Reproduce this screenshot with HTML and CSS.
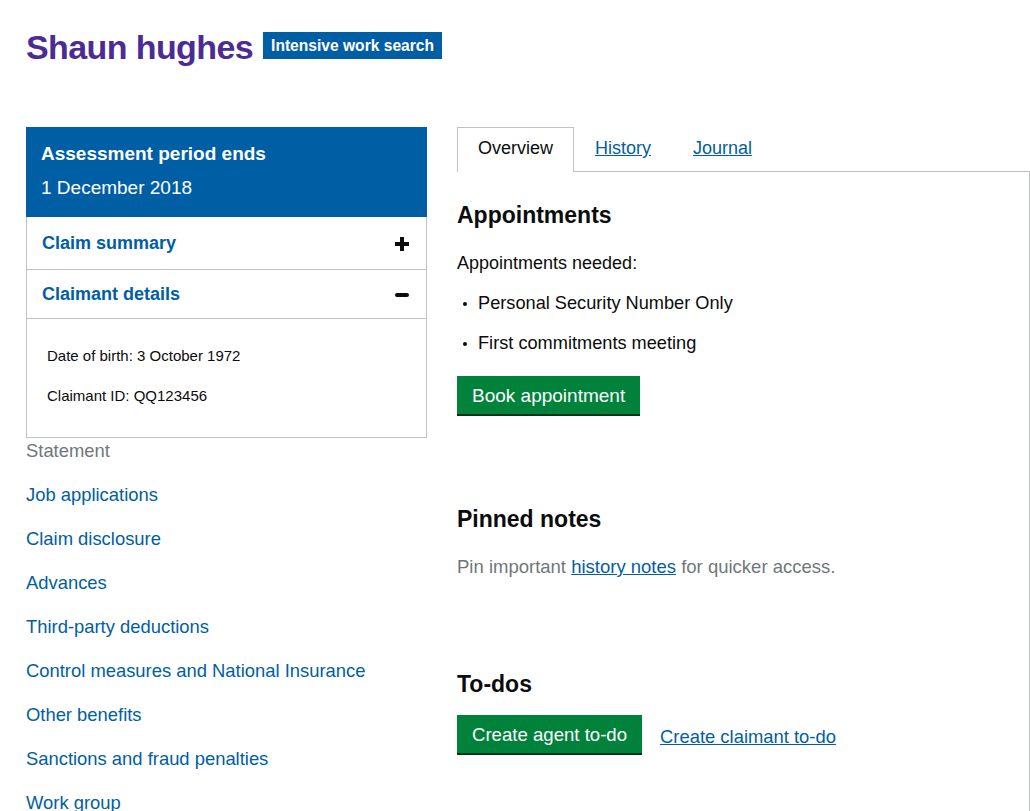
FILE: index.html
```html
<!DOCTYPE html>
<html lang="en">
<head>
<meta charset="utf-8">
<title>Shaun hughes</title>
<link rel="stylesheet" href="styles.css">
</head>
<body>
<div class="page">
  <header class="title-row">
    <h1 class="name">Shaun hughes</h1>
    <span class="tag">Intensive work search</span>
  </header>

  <div class="layout">
    <aside class="side">
      <div class="period">
        <p class="period-label">Assessment period ends</p>
        <p class="period-date">1 December 2018</p>
      </div>
      <div class="acc">
        <div class="acc-row">
          <span class="acc-title">Claim summary</span>
          <svg class="acc-icon" width="14" height="14" viewBox="0 0 14 14"><path d="M5 0h4v5h5v4H9v5H5V9H0V5h5z" fill="#0b0c0c"/></svg>
        </div>
        <div class="acc-row">
          <span class="acc-title">Claimant details</span>
          <svg class="acc-icon" width="14" height="14" viewBox="0 0 14 14"><rect x="0" y="5" width="14" height="4" rx="2" fill="#0b0c0c"/></svg>
        </div>
        <div class="acc-body">
          <p>Date of birth: 3 October 1972</p>
          <p>Claimant ID: QQ123456</p>
        </div>
      </div>
      <ul class="side-nav">
        <li class="muted">Statement</li>
        <li><a href="#">Job applications</a></li>
        <li><a href="#">Claim disclosure</a></li>
        <li><a href="#">Advances</a></li>
        <li><a href="#">Third-party deductions</a></li>
        <li><a href="#">Control measures and National Insurance</a></li>
        <li><a href="#">Other benefits</a></li>
        <li><a href="#">Sanctions and fraud penalties</a></li>
        <li><a href="#">Work group</a></li>
      </ul>
    </aside>

    <main class="main">
      <nav class="tabs">
        <span class="tab active">Overview</span>
        <a class="tab" href="#">History</a>
        <a class="tab" href="#">Journal</a>
      </nav>
      <section class="panel">
        <h2 class="h2">Appointments</h2>
        <p class="body">Appointments needed:</p>
        <ul class="bullets">
          <li>Personal Security Number Only</li>
          <li>First commitments meeting</li>
        </ul>
        <button class="btn">Book appointment</button>

        <h2 class="h2 gap">Pinned notes</h2>
        <p class="body pin muted">Pin important <a href="#">history notes</a> for quicker access.</p>

        <h2 class="h2 gap">To-dos</h2>
        <div class="actions">
          <button class="btn btn-sm">Create agent to-do</button>
          <a href="#" class="action-link">Create claimant to-do</a>
        </div>
      </section>
    </main>
  </div>
</div>
</body>
</html>
```

FILE: styles.css
```css
* { box-sizing: border-box; }
html, body { margin: 0; padding: 0; background: #fff; }
body {
  font-family: "Liberation Sans", Arial, sans-serif;
  color: #0b0c0c;
  font-size: 19px;
  line-height: 25px;
  overflow: hidden;
}
a { color: #005ea5; }
p { margin: 0; }
ul { margin: 0; padding: 0; list-style: none; }

.page { padding: 27px 0 0 26px; }

.title-row {
  display: flex;
  align-items: flex-start;
  gap: 10px;
  height: 100px;
}
.name {
  margin: 0;
  font-size: 34px;
  line-height: 40px;
  font-weight: 700;
  color: #4c2c92;
  letter-spacing: -0.6px;
}
.tag {
  margin-top: 5px;
  background: #005ea5;
  color: #fff;
  font-weight: 700;
  font-size: 15.6px;
  line-height: 27px;
  padding: 0 8px;
}

.layout { display: flex; gap: 30px; align-items: flex-start; }
.side { width: 401px; flex: none; }
.main { flex: 1; min-width: 0; }

.period {
  background: #005ea5;
  color: #fff;
  padding: 14px 15px 17px;
  height: 90px;
}
.period-label { font-weight: 700; }
.period-date { margin-top: 9px; }

.acc { border: 1px solid #bfc1c3; border-top: 0; }
.acc-row {
  display: flex;
  align-items: center;
  justify-content: space-between;
  padding: 14px 17px 13px 15px;
  border-bottom: 1px solid #bfc1c3;
}
.acc-row + .acc-row { padding: 12px 17px 11px 15px; }
.acc-title { color: #005ea5; font-weight: 700; font-size: 18px; }
.acc-icon { display: block; }
.acc-body { padding: 27px 20px 31px; font-size: 15px; line-height: 20px; }
.acc-body p + p { margin-top: 20px; }

.side-nav li { margin-bottom: 19px; font-size: 18.4px; }
.side-nav a { text-decoration: none; }
.muted { color: #6f777b; }

.tabs { display: flex; align-items: flex-end; position: relative; z-index: 1; }
.tab {
  padding: 8px 20px 11px;
  border: 1px solid transparent;
  border-bottom: 0;
  margin-bottom: -1px;
  font-size: 18px;
}
.tab.active { border-color: #bfc1c3; background: #fff; color: #0b0c0c; }
.panel {
  border-top: 1px solid #bfc1c3;
  border-right: 1px solid #bfc1c3;
  padding: 28px 0 60px 0;
  min-height: 700px;
}
.h2 { margin: 0; font-size: 23px; line-height: 30px; font-weight: 700; }
.h2.gap { margin-top: 90px; }
.body { margin-top: 21px; font-size: 18px; }
.body.pin { margin-top: 20px; font-size: 18.5px; }
.bullets { margin-top: 15px; font-size: 18.2px; }
.bullets li { position: relative; padding-left: 21px; margin-bottom: 15px; }
.bullets li::before {
  content: "";
  position: absolute;
  left: 6px; top: 11px;
  width: 4px; height: 4px;
  border-radius: 50%;
  background: #0b0c0c;
}
.bullets li:last-child { margin-bottom: 0; }
.btn {
  margin-top: 20px;
  display: inline-block;
  background: #00823b;
  color: #fff;
  border: 0;
  box-shadow: 0 2px 0 #003618;
  font-family: inherit;
  font-size: 19px;
  line-height: 25px;
  padding: 7px 15px 6px;
  cursor: pointer;
}
.btn-sm { font-size: 18.6px; }
.actions { display: flex; align-items: center; gap: 18px; margin-top: 16px; }
.actions .btn { margin-top: 0; }
.action-link { font-size: 18.4px; margin-top: 4px; }
```
